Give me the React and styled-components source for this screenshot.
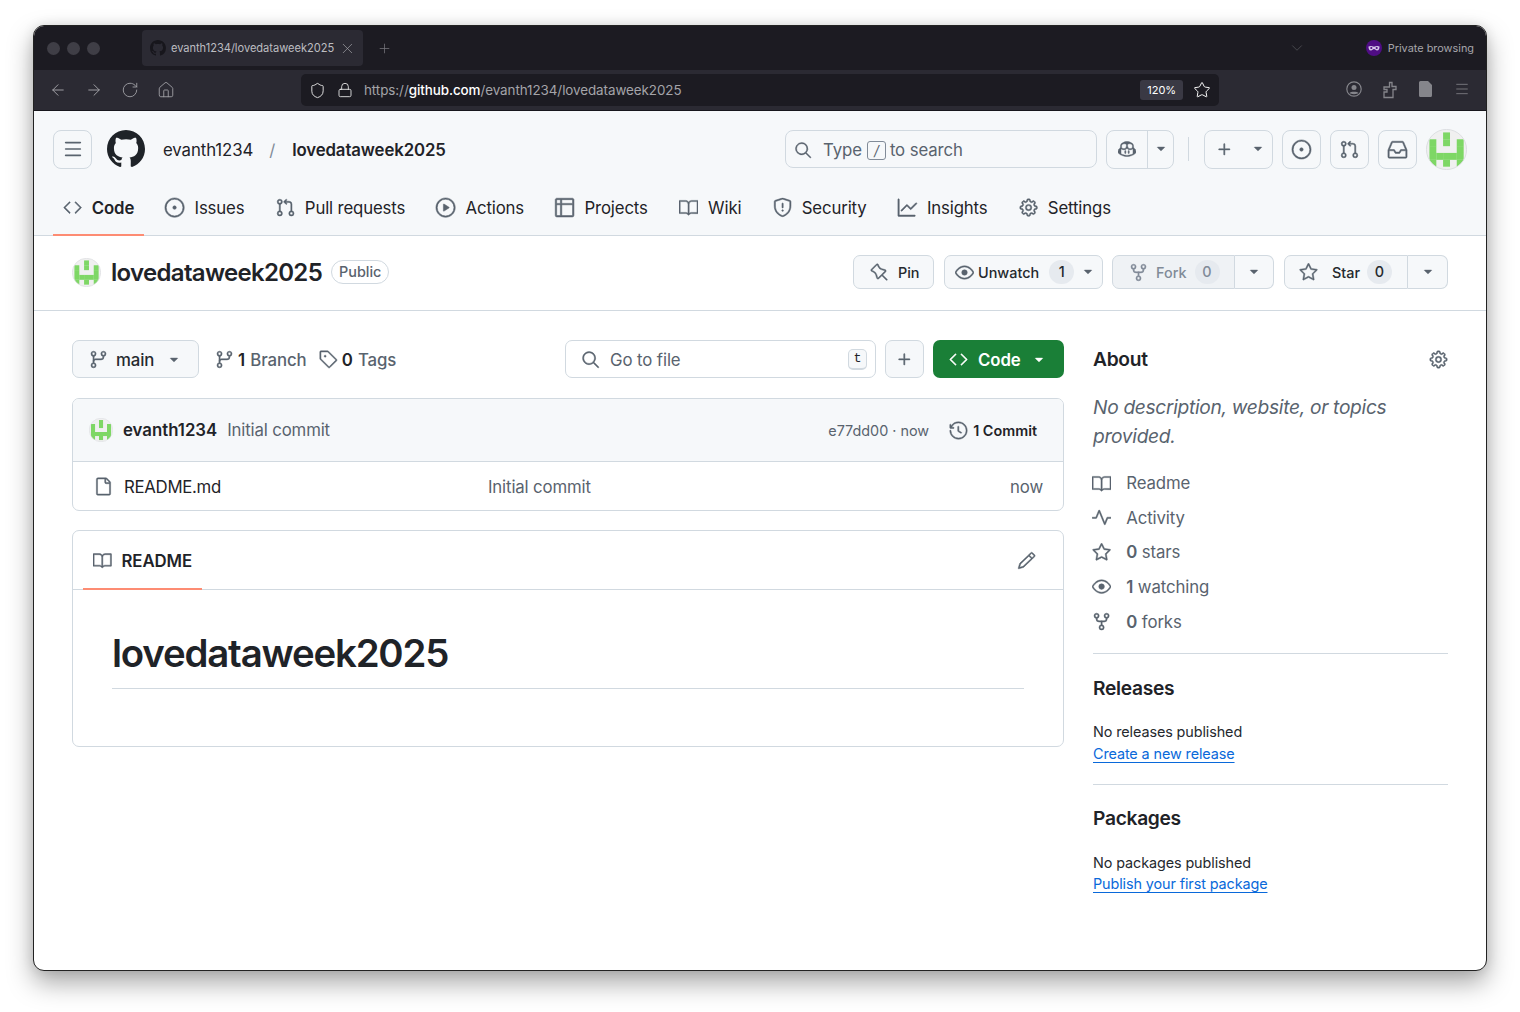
import React from "react";
import styled, { createGlobalStyle } from "styled-components";
import {
  GoBook, GoCode, GoCopilot, GoEye, GoFile, GoGear, GoGitBranch, GoGitPullRequest, GoGraph,
  GoHistory, GoInbox, GoIssueOpened, GoPencil, GoPin, GoPlay, GoPlus, GoPulse,
  GoRepoForked, GoSearch, GoShield, GoStar, GoTable, GoTag, GoTriangleDown,
} from "react-icons/go";
import { ArrowLeft, ArrowRight, ChevronDown, Home, Lock, Menu, Plus, RotateCw, Shield, Star, X } from "lucide-react";

const GlobalStyle = createGlobalStyle`
  * { box-sizing: border-box; }
  html, body { margin: 0; background: #fff; }
  body { font-family: Inter, "Liberation Sans", sans-serif; color: #1f2328; letter-spacing: -0.1px; }
  /* octicons from react-icons sit on a 24 grid, the page shows the heavier 16 grid ones */
  svg[stroke-width="0"] { stroke-width: 0.6px; }
`;

const Page = styled.div`
  width: 1520px;
  height: 1012px;
  padding: 25px 33px 41px;
  overflow: hidden;
`;
const Win = styled.div`
  height: 946px;
  background: #fff;
  border: 1px solid #222;
  border-radius: 11px;
  overflow: hidden;
  box-shadow: 0 12px 26px rgba(0, 0, 0, 0.34), 0 0 12px rgba(0, 0, 0, 0.1);
`;
const TabBar = styled.div`
  height: 44px;
  background: #1c1b22;
  display: flex;
  align-items: center;
  padding: 0 12px 0 13px;
`;
const Light = styled.span`
  width: 13px;
  height: 13px;
  border-radius: 50%;
  background: #3f3e46;
  margin-right: 7px;
`;
const Tab = styled.div`
  width: 221px;
  height: 36px;
  margin: 0 14px 0 35px;
  padding: 0 7px 0 8px;
  background: #2b2a33;
  border-radius: 4px;
  display: flex;
  align-items: center;
  gap: 5px;
  color: #bdbdc1;
  font-size: 11.1px;
  letter-spacing: -0.03px;
  white-space: nowrap;
  svg:first-child { color: #17161c; }
  svg:last-child { margin-left: auto; color: #a3a3a8; }
`;
const Spacer = styled.div`
  flex: 1;
`;
const Muted = styled.span`
  display: flex;
  color: ${(p) => p.$color || "#6f6f75"};
  margin-left: ${(p) => p.$left || 0}px;
`;
const Fit = styled.span`
  display: flex;
  svg { transform: scale(${(p) => p.$s || 1}); }
`;
const Private = styled.span`
  display: flex;
  align-items: center;
  gap: 6px;
  color: #a6a6ab;
  font-size: 10.9px;
  letter-spacing: 0;
`;
const ToolBar = styled.div`
  height: 41px;
  background: #2b2a33;
  border-bottom: 1px solid #17161c;
  display: flex;
  align-items: center;
  color: #a0a0a6;
  padding-left: 15px;
`;
const NavIcons = styled.div`
  display: flex;
  gap: 18px;
  width: 252px;
`;
const UrlBar = styled.div`
  width: 918px;
  height: 32px;
  background: #1c1b22;
  border-radius: 5px;
  display: flex;
  align-items: center;
  padding: 0 8px;
  font-size: 13.4px;
  letter-spacing: -0.06px;
  color: #a4a4a9;
  b { color: #fff; font-weight: 500; }
`;
const UrlIcons = styled.span`
  display: flex;
  gap: 11px;
  color: #eee;
  margin-right: 11px;
`;
const Zoom = styled.span`
  margin: 0 10px 0 auto;
  padding: 0 7px;
  height: 20px;
  line-height: 20px;
  background: #3a3944;
  border-radius: 3px;
  color: #fff;
  font-size: 11px;
`;
const RightIcons = styled.div`
  display: flex;
  gap: 18px;
  margin-left: auto;
  padding-right: 15px;
  color: #85858b;
`;
const ToolIcon = styled.span`
  display: flex;
  justify-content: center;
  width: 18px;
`;
const GhHeader = styled.header`
  height: 125px;
  background: #f6f8fa;
  border-bottom: 1px solid #d1d9e0;
  padding: 18px 19px 0;
`;
const TopRow = styled.div`
  display: flex;
  align-items: center;
  height: 40px;
`;
const Btn = styled.span`
  display: inline-flex;
  align-items: center;
  justify-content: center;
  flex: none;
  width: ${(p) => p.$w}px;
  height: 39px;
  margin-left: ${(p) => p.$left || 0}px;
  background: #f6f8fa;
  border: 1px solid #d1d9e0;
  border-radius: 8px;
  color: #59636e;
`;
const SplitBtn = styled(Btn)`
  justify-content: flex-start;
  > span { display: flex; align-items: center; justify-content: center; height: 100%; }
  > span:first-child { width: ${(p) => p.$lead}px; }
  > span + span { flex: 1; }
  > span.line { border-left: 1px solid #d1d9e0; }
`;
const CaretBox = styled.span`
  display: flex;
  align-items: center;
  justify-content: center;
  flex: none;
  width: 19px;
`;
const Crumb = styled.span`
  padding-top: 2px;
  font-size: 16.8px;
  font-weight: ${(p) => (p.$strong ? 600 : 400)};
  color: ${(p) => (p.$dim ? "#818b98" : "#1f2328")};
  margin-left: ${(p) => p.$left}px;
`;
const SearchBox = styled.div`
  width: 312px;
  height: 38px;
  margin-left: auto;
  padding: 2px 8px 0;
  background: #f6f8fa;
  border: 1px solid #d1d9e0;
  border-radius: 8px;
  display: flex;
  align-items: center;
  color: #59636e;
  font-size: 16.8px;
  svg { margin-right: 11px; }
`;
const Slash = styled.span`
  width: 19px;
  height: 19px;
  margin: 0 4px 0 5px;
  border: 1px solid #818b98;
  border-radius: 3px;
  font-size: 14px;
  line-height: 17px;
  text-align: center;
  font-style: italic;
`;
const VRule = styled.span`
  width: 1px;
  height: 24px;
  margin: 0 15px 0 14px;
  background: #d1d9e0;
`;
const Tabs = styled.nav`
  display: flex;
  gap: 12px;
  height: 45px;
  margin-top: 22px;
`;
const TabItem = styled.a`
  display: flex;
  align-items: center;
  gap: 10px;
  height: 45px;
  padding: 0 9.6px 10px;
  font-size: 16.8px;
  letter-spacing: -0.15px;
  font-weight: ${(p) => (p.$on ? 600 : 400)};
  color: #1f2328;
  border-bottom: 2px solid ${(p) => (p.$on ? "#fd8c73" : "transparent")};
  svg { color: #59636e; }
`;
const RepoHead = styled.section`
  height: 75px;
  border-bottom: 1px solid #d1d9e0;
  padding: 0 38px 2px;
  display: flex;
  align-items: center;
`;
const RepoName = styled.h1`
  margin: 2px 9px 0 10px;
  font-size: 24px;
  font-weight: 600;
  letter-spacing: -0.69px;
  line-height: 30px;
`;
const Pill = styled.span`
  height: 24px;
  padding: 0 7px;
  line-height: 21px;
  border: 1px solid #d1d9e0;
  border-radius: 12px;
  font-size: 14.4px;
  font-weight: 500;
  letter-spacing: 0;
  color: #59636e;
`;
const ActionBtn = styled.span`
  display: inline-flex;
  align-items: center;
  justify-content: ${(p) => p.$justify || "flex-start"};
  gap: ${(p) => p.$gap ?? 7}px;
  height: 34px;
  width: ${(p) => p.$w}px;
  margin-left: ${(p) => p.$left || 0}px;
  padding: 0 ${(p) => p.$pad ?? 10}px;
  background: ${(p) => (p.$off ? "#eff2f5" : "#f6f8fa")};
  border: 1px solid #d1d9e0;
  border-radius: ${(p) => (p.$part === "l" ? "7px 0 0 7px" : p.$part === "r" ? "0 7px 7px 0" : "7px")};
  ${(p) => (p.$part === "r" ? "border-left: 0;" : "")}
  font-size: 14.4px;
  font-weight: 500;
  letter-spacing: 0;
  color: ${(p) => (p.$off ? "#818b98" : "#25292e")};
  svg { color: ${(p) => (p.$off ? "#818b98" : "#59636e")}; flex: none; }
`;
const Counter = styled.span`
  min-width: 25px;
  height: 24px;
  line-height: 24px;
  text-align: center;
  border-radius: 12px;
  background: #e6eaef;
  margin-left: ${(p) => p.$left || 0}px;
  color: ${(p) => (p.$off ? "#818b98" : "#25292e")};
`;
const Main = styled.main`
  display: grid;
  grid-template-columns: 992px 355px;
  gap: 29px;
  padding: 29px 38px 0;
`;
const FileBar = styled.div`
  display: flex;
  align-items: center;
  height: 38px;
`;
const BranchBtn = styled.span`
  display: flex;
  align-items: center;
  width: 127px;
  height: 38px;
  padding-left: 16px;
  padding-top: 1px;
  background: #f6f8fa;
  border: 1px solid #d1d9e0;
  border-radius: 7px;
  font-size: 16.8px;
  font-weight: 500;
  color: #25292e;
  svg { color: #59636e; }
  em { font-style: normal; margin: 0 10px 0 8px; }
`;
const Meta = styled.span`
  display: flex;
  align-items: center;
  gap: 4px;
  margin-left: ${(p) => p.$left}px;
  padding-top: 1px;
  font-size: 16.8px;
  font-weight: 500;
  word-spacing: 1px;
  color: #59636e;
  b { color: #1f2328; font-weight: 600; }
`;
const GoFileBox = styled.div`
  display: flex;
  align-items: center;
  width: 311px;
  height: 38px;
  margin-left: auto;
  padding: 1px 8px 0 15px;
  border: 1px solid #d1d9e0;
  border-radius: 7px;
  font-size: 16.8px;
  color: #59636e;
  svg { margin-right: 10px; }
`;
const Kbd = styled.kbd`
  width: 19px;
  height: 21px;
  margin-left: auto;
  background: #f6f8fa;
  border: 1px solid #d1d9e0;
  border-bottom-width: 2px;
  border-radius: 5px;
  font-family: "Liberation Mono", monospace;
  font-size: 13.4px;
  line-height: 18px;
  text-align: center;
  color: #1f2328;
`;
const IconBtn = styled.span`
  display: flex;
  align-items: center;
  justify-content: center;
  width: 39px;
  height: 38px;
  margin: 0 9px;
  background: #f6f8fa;
  border: 1px solid #d1d9e0;
  border-radius: 7px;
  color: #59636e;
`;
const GreenBtn = styled.span`
  display: flex;
  align-items: center;
  width: 131px;
  height: 38px;
  padding-left: 16px;
  padding-top: 1px;
  background: #1a7f37;
  border-radius: 7px;
  color: #fff;
  font-size: 16.8px;
  font-weight: 600;
  em { font-style: normal; margin: 0 9px 0 10px; }
`;
const Box = styled.div`
  margin-top: ${(p) => p.$top}px;
  height: ${(p) => p.$h}px;
  border: 1px solid #d1d9e0;
  border-radius: 7px;
  overflow: hidden;
`;
const CommitHead = styled.div`
  display: flex;
  align-items: center;
  height: 63px;
  padding: 0 26px 0 16px;
  background: #f6f8fa;
  border-bottom: 1px solid #d1d9e0;
`;
const Author = styled.span`
  margin: 0 10px;
  font-size: 16.8px;
  font-weight: 600;
  letter-spacing: 0;
`;
const Grey = styled.span`
  color: #59636e;
  font-size: ${(p) => p.$size || 16.8}px;
  letter-spacing: ${(p) => (p.$size ? 0 : -0.15)}px;
  margin-left: ${(p) => p.$left || 0}px;
`;
const CommitCount = styled.span`
  display: flex;
  align-items: center;
  gap: 5px;
  margin-left: 20px;
  font-size: 14.4px;
  font-weight: 600;
  letter-spacing: 0;
  svg { color: #59636e; }
`;
const FileRow = styled.div`
  display: grid;
  grid-template-columns: 394px 1fr auto;
  align-items: center;
  height: 48px;
  padding: 1px 20px 0 21px;
  font-size: 16.8px;
`;
const FileName = styled.span`
  display: flex;
  align-items: center;
  gap: 11px;
  letter-spacing: -0.3px;
  svg { color: #59636e; }
`;
const ReadmeBar = styled.div`
  display: flex;
  align-items: center;
  justify-content: space-between;
  height: 59px;
  padding: 0 27px 0 10px;
  border-bottom: 1px solid #d1d9e0;
  svg { color: #59636e; }
`;
const ReadmeTab = styled.span`
  display: flex;
  align-items: center;
  gap: 10px;
  width: 119px;
  height: 59px;
  padding: 3px 10px 0 10px;
  border-bottom: 2px solid #fd8c73;
  font-size: 16.8px;
  font-weight: 600;
`;
const Markdown = styled.div`
  padding: 39px 39px 0;
`;
const BigTitle = styled.h2`
  margin: 0;
  padding-bottom: 11px;
  border-bottom: 1px solid #d1d9e0;
  font-size: 38.4px;
  font-weight: 600;
  letter-spacing: -1.19px;
  line-height: 48px;
`;
const SideHead = styled.div`
  display: flex;
  align-items: center;
  justify-content: space-between;
  height: 38px;
  color: #59636e;
`;
const SideTitle = styled.h3`
  margin: 0;
  font-size: 19.2px;
  font-weight: 600;
  letter-spacing: -0.3px;
  line-height: 40px;
  color: #1f2328;
`;
const Desc = styled.p`
  margin: 15px 0 0;
  font-size: 19.2px;
  font-style: italic;
  letter-spacing: -0.32px;
  line-height: 29px;
  color: #59636e;
`;
const SideLink = styled.div`
  display: flex;
  align-items: center;
  gap: 15px;
  height: 34.6px;
  margin-left: -1px;
  font-size: 16.8px;
  color: #59636e;
  b { font-weight: 600; }
`;
const SideList = styled.div`
  margin-top: 15px;
  padding-bottom: 14px;
`;
const SideBlock = styled.div`
  border-top: 1px solid #d1d9e0;
  padding-top: ${(p) => p.$pt || 14}px;
  padding-bottom: 19px;
`;
const Small = styled.div`
  font-size: 14.4px;
  line-height: ${(p) => p.$lh || 22}px;
  margin-top: ${(p) => p.$top || 0}px;
  color: #25292e;
`;
const Link = styled.a`
  color: #0969da;
  text-decoration: underline;
  text-underline-offset: 3px;
`;

function GithubMark({ size }) {
  return (
    <svg width={size} height={size} viewBox="0 0 16 16" fill="currentColor">
      <path d="M8 0c4.42 0 8 3.58 8 8a8.013 8.013 0 0 1-5.45 7.59c-.4.08-.55-.17-.55-.38 0-.27.01-1.13.01-2.2 0-.75-.25-1.23-.54-1.48 1.78-.2 3.65-.88 3.65-3.95 0-.88-.31-1.59-.82-2.15.08-.2.36-1.02-.08-2.12 0 0-.67-.22-2.2.82-.64-.18-1.32-.27-2-.27-.68 0-1.36.09-2 .27-1.53-1.03-2.2-.82-2.2-.82-.44 1.1-.16 1.92-.08 2.12-.51.56-.82 1.28-.82 2.15 0 3.06 1.86 3.75 3.64 3.95-.23.2-.44.55-.51 1.07-.46.21-1.61.55-2.33-.66-.15-.24-.6-.83-1.23-.82-.67.01-.27.38.01.53.34.19.73.9.82 1.13.16.45.68 1.31 2.69.94 0 .67.01 1.3.01 1.49 0 .21-.15.45-.55.38A7.995 7.995 0 0 1 0 8c0-4.42 3.58-8 8-8Z" />
    </svg>
  );
}

function Identicon({ size }) {
  const cells = ["00100", "10101", "10001", "11111", "10101"];
  return (
    <svg width={size} height={size} viewBox="0 0 48 48" style={{ flex: "none" }}>
      <defs>
        <clipPath id="avatar-clip">
          <circle cx="24" cy="24" r="23.5" />
        </clipPath>
      </defs>
      <circle cx="24" cy="24" r="23.5" fill="#f0f0f0" />
      <g clipPath="url(#avatar-clip)">
        {cells.map((row, y) =>
          [...row].map((c, x) =>
            c === "1" ? <rect key={`${x}-${y}`} x={4 + x * 8} y={4 + y * 8} width="8.1" height="8.1" fill="#7ed765" /> : null
          )
        )}
      </g>
      <circle cx="24" cy="24" r="23.5" fill="none" stroke="#d8dade" />
    </svg>
  );
}

function Mask() {
  return (
    <svg width="16" height="16" viewBox="0 0 16 16">
      <circle cx="8" cy="8" r="8" fill="#4f0d84" />
      <path d="M2.5 6.5c2-1 3.5-.5 5.5.3 2-.8 3.5-1.300 5.500-.3 0 3.500-1.500 4-2.500 4S9 9 8 9s-2 1.500-3 1.500-2.500-.5-2.500-4z" fill="#d6c6ea" />
      <circle cx="5.300" cy="8" r="1.100" fill="#4f0d84" />
      <circle cx="10.700" cy="8" r="1.100" fill="#4f0d84" />
    </svg>
  );
}

function PuzzleIcon() {
  return (
    <svg width="16" height="18" viewBox="0 0 16 18" fill="none" stroke="currentColor" strokeWidth="1.300">
      <path d="M2 16.500h9v-8h3v-3h-4V1.500H7.500V6H2v2.500h3V11H2z" />
    </svg>
  );
}

function PageIcon() {
  return (
    <svg width="14" height="16" viewBox="0 0 14 16" fill="currentColor">
      <path d="M1.500 0H9l4 4v10.500a1.500 1.500 0 0 1-1.500 1.500h-10A1.500 1.500 0 0 1 0 14.500v-13A1.500 1.500 0 0 1 1.500 0z" />
    </svg>
  );
}

function ProfileIcon() {
  return (
    <svg width="16" height="16" viewBox="0 0 16 16" fill="none" stroke="currentColor" strokeWidth="1.200">
      <circle cx="8" cy="8" r="7.200" />
      <circle cx="8" cy="6.500" r="2.500" fill="currentColor" stroke="none" />
      <path d="M3.500 12c1-1.800 8-1.800 9 0-1.200 1.500-7.800 1.500-9 0z" fill="currentColor" stroke="none" />
    </svg>
  );
}

function Caret() {
  return (
    <CaretBox>
      <GoTriangleDown size={14} />
    </CaretBox>
  );
}

const navItems = [
  [GoCode, "Code", 1, true],
  [GoIssueOpened, "Issues", 1.1],
  [GoGitPullRequest, "Pull requests", 1],
  [GoPlay, "Actions", 1.1],
  [GoTable, "Projects", 1.17],
  [GoBook, "Wiki", 1],
  [GoShield, "Security", 1.05],
  [GoGraph, "Insights", 1.1],
  [GoGear, "Settings", 1],
];

const sideItems = [
  [GoBook, null, "Readme"],
  [GoPulse, null, "Activity"],
  [GoStar, "0", "stars"],
  [GoEye, "1", "watching"],
  [GoRepoForked, "0", "forks"],
];

export default function App() {
  return (
    <>
      <GlobalStyle />
      <Page>
        <Win>
          <TabBar>
            <Light />
            <Light />
            <Light />
            <Tab>
              <GithubMark size={16} />
              evanth1234/lovedataweek2025
              <X size={17} strokeWidth={1} />
            </Tab>
            <Muted $color="#77777d"><Plus size={15} strokeWidth={1.2} /></Muted>
            <Spacer />
            <Muted $color="#55555b"><ChevronDown size={18} strokeWidth={1} /></Muted>
            <Muted $left={60} />
            <Private>
              <Mask />
              Private browsing
            </Private>
          </TabBar>
          <ToolBar>
            <NavIcons>
              <ArrowLeft size={18} strokeWidth={1.300} />
              <ArrowRight size={18} strokeWidth={1.300} />
              <RotateCw size={18} strokeWidth={1.200} />
              <Home size={18} strokeWidth={1.200} />
            </NavIcons>
            <UrlBar>
              <UrlIcons>
                <Shield size={17} strokeWidth={1.300} />
                <Lock size={16} strokeWidth={1.300} />
              </UrlIcons>
              <span>https://<b>github.com</b>/evanth1234/lovedataweek2025</span>
              <Zoom>120%</Zoom>
              <Muted $color="#fff"><Star size={18} strokeWidth={1.300} /></Muted>
            </UrlBar>
            <RightIcons>
              <ToolIcon><ProfileIcon /></ToolIcon>
              <ToolIcon><PuzzleIcon /></ToolIcon>
              <ToolIcon><PageIcon /></ToolIcon>
              <ToolIcon><Menu size={16} strokeWidth={1.200} /></ToolIcon>
            </RightIcons>
          </ToolBar>

          <GhHeader>
            <TopRow>
              <Btn $w={39}><Menu size={22} strokeWidth={1.800} /></Btn>
              <Muted $left={15} $color="#1f2328"><GithubMark size={38} /></Muted>
              <Crumb $left={18}>evanth1234</Crumb>
              <Crumb $left={16} $dim>/</Crumb>
              <Crumb $left={17} $strong>lovedataweek2025</Crumb>
              <SearchBox>
                <GoSearch size={18} />
                Type<Slash>/</Slash>to search
              </SearchBox>
              <SplitBtn $w={68} $lead={40} $left={9}>
                <span><GoCopilot size={18} /></span>
                <span className="line"><Caret /></span>
              </SplitBtn>
              <VRule />
              <SplitBtn $w={69} $lead={38}>
                <span><GoPlus size={19} /></span>
                <span><Caret /></span>
              </SplitBtn>
              <Btn $w={39} $left={9}><Fit $s={1.1}><GoIssueOpened size={19} /></Fit></Btn>
              <Btn $w={39} $left={9}><GoGitPullRequest size={19} /></Btn>
              <Btn $w={39} $left={9}><Fit $s={1.1}><GoInbox size={19} /></Fit></Btn>
              <Muted $left={9}><Identicon size={41} /></Muted>
            </TopRow>
            <Tabs>
              {navItems.map(([Icon, label, scale, on]) => (
                <TabItem key={label} $on={on}>
                  <Fit $s={scale}><Icon size={19.2} /></Fit>
                  {label}
                </TabItem>
              ))}
            </Tabs>
          </GhHeader>

          <RepoHead>
            <Identicon size={29} />
            <RepoName>lovedataweek2025</RepoName>
            <Pill>Public</Pill>
            <Spacer />
            <ActionBtn $w={81} $pad={16} $gap={9}><GoPin size={19} />Pin</ActionBtn>
            <ActionBtn $w={159} $left={10} $gap={4}>
              <GoEye size={19} />Unwatch<Counter $left={6}>1</Counter><Caret />
            </ActionBtn>
            <ActionBtn $w={123} $left={9} $pad={16} $part="l" $gap={8} $off>
              <GoRepoForked size={19} />Fork<Counter $off>0</Counter>
            </ActionBtn>
            <ActionBtn $w={39} $part="r" $justify="center" $pad={0}><Caret /></ActionBtn>
            <ActionBtn $w={124} $left={10} $pad={14} $part="l" $gap={14}>
              <GoStar size={19} />Star<Counter $left={-7}>0</Counter>
            </ActionBtn>
            <ActionBtn $w={40} $part="r" $justify="center" $pad={0}><Caret /></ActionBtn>
          </RepoHead>

          <Main>
            <div>
              <FileBar>
                <BranchBtn>
                  <GoGitBranch size={19} />
                  <em>main</em>
                  <Caret />
                </BranchBtn>
                <Meta $left={16}>
                  <GoGitBranch size={19} />
                  <span><b>1</b> Branch</span>
                </Meta>
                <Meta $left={12}>
                  <GoTag size={19} />
                  <span><b>0</b> Tags</span>
                </Meta>
                <GoFileBox>
                  <GoSearch size={19} />
                  Go to file
                  <Kbd>t</Kbd>
                </GoFileBox>
                <IconBtn><GoPlus size={19} /></IconBtn>
                <GreenBtn>
                  <GoCode size={19} />
                  <em>Code</em>
                  <Caret />
                </GreenBtn>
              </FileBar>
              <Box $top={20} $h={113}>
                <CommitHead>
                  <Identicon size={24} />
                  <Author>evanth1234</Author>
                  <Grey>Initial commit</Grey>
                  <Spacer />
                  <Grey $size={14.4}>e77dd00 · now</Grey>
                  <CommitCount><GoHistory size={19} />1 Commit</CommitCount>
                </CommitHead>
                <FileRow>
                  <FileName><GoFile size={19} />README.md</FileName>
                  <Grey>Initial commit</Grey>
                  <Grey>now</Grey>
                </FileRow>
              </Box>
              <Box $top={19} $h={217}>
                <ReadmeBar>
                  <ReadmeTab><GoBook size={19} />README</ReadmeTab>
                  <GoPencil size={19} />
                </ReadmeBar>
                <Markdown>
                  <BigTitle>lovedataweek2025</BigTitle>
                </Markdown>
              </Box>
            </div>
            <aside>
              <SideHead>
                <SideTitle>About</SideTitle>
                <GoGear size={19} />
              </SideHead>
              <Desc>No description, website, or topics provided.</Desc>
              <SideList>
                {sideItems.map(([Icon, count, label]) => (
                  <SideLink key={label}>
                    <Icon size={19.2} />
                    <span>{count && <b>{count}</b>} {label}</span>
                  </SideLink>
                ))}
              </SideList>
              <SideBlock>
                <SideTitle>Releases</SideTitle>
                <Small $top={13}>No releases published</Small>
                <Small><Link>Create a new release</Link></Small>
              </SideBlock>
              <SideBlock $pt={13}>
                <SideTitle>Packages</SideTitle>
                <Small $top={14}>No packages published</Small>
                <Small $lh={20}><Link>Publish your first package</Link></Small>
              </SideBlock>
            </aside>
          </Main>
        </Win>
      </Page>
    </>
  );
}
